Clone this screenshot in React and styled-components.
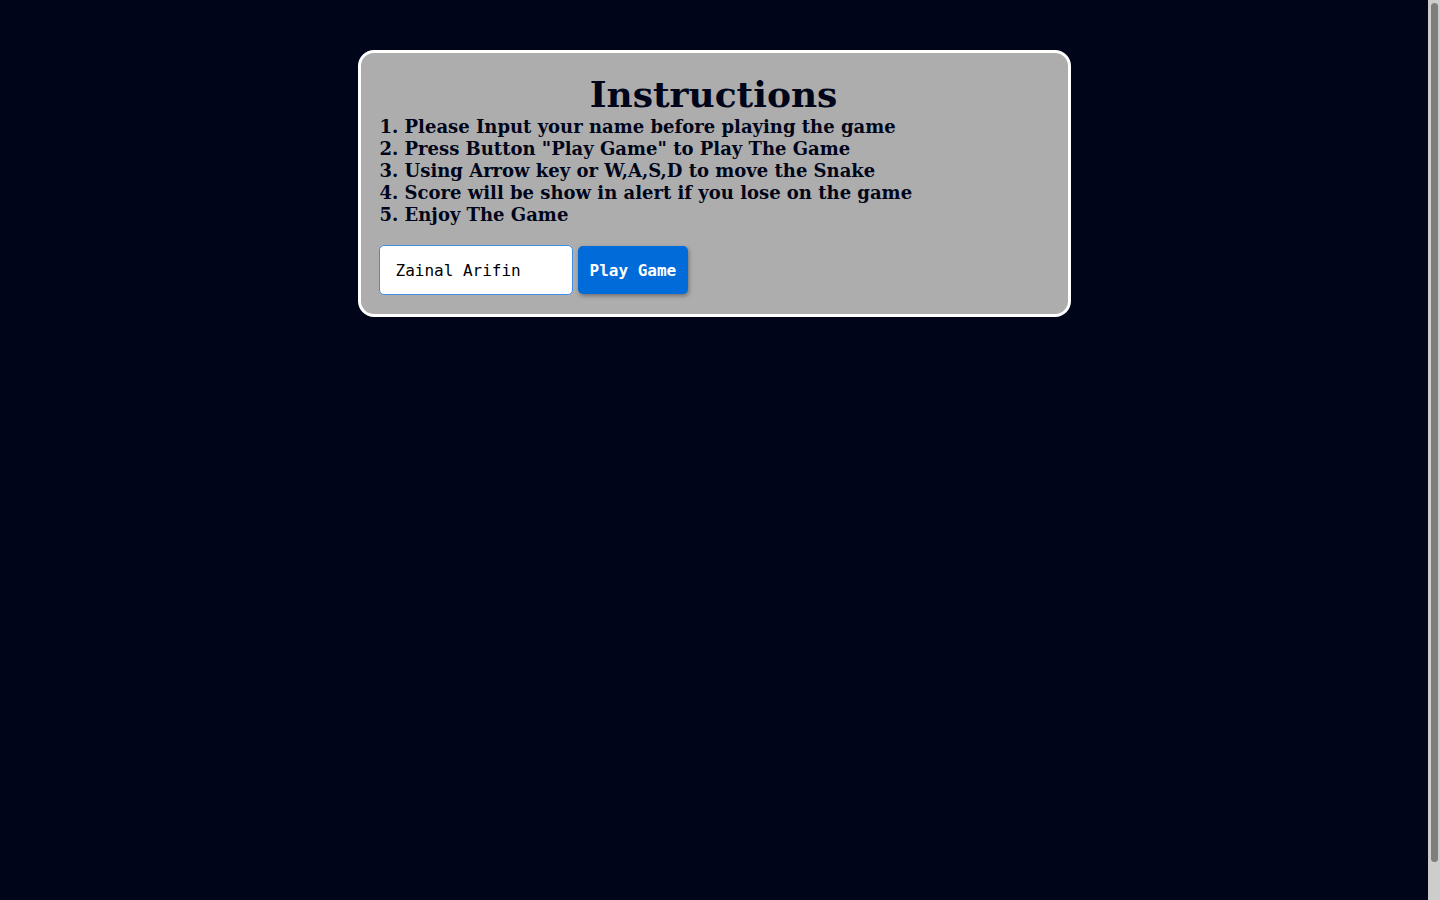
import { useState } from "react";
import styled, { createGlobalStyle } from "styled-components";

const GlobalStyle = createGlobalStyle`
  html, body {
    margin: 0;
    padding: 0;
    background: #00051a;
  }
  body {
    font-family: "DejaVu Serif", serif;
  }
`;

const Page = styled.div`
  box-sizing: border-box;
  min-height: 100vh;
  padding: 50px 12px 0 0;
  display: flex;
  justify-content: center;
  align-items: flex-start;
`;

// drawn scrollbar, the page in the picture is a bit taller than the window
const ScrollTrack = styled.div`
  position: fixed;
  top: 0;
  right: 0;
  width: 12px;
  height: 100vh;
  background: #cdcdcd;
`;

const ScrollThumb = styled.div`
  position: absolute;
  top: 3px;
  left: 3px;
  width: 7px;
  height: 859px;
  background: #7e7e7e;
  border-radius: 4px;
`;

const Card = styled.div`
  width: 668px;
  padding: 20px 20px 19px 19px;
  background: #adadad;
  border: 3px solid #ffffff;
  border-radius: 16px;
  color: #00051a;
`;

const Title = styled.h1`
  margin: 0;
  text-align: center;
  font-size: 36px;
  font-weight: bold;
  line-height: 43px;
`;

const Steps = styled.div`
  font-size: 18px;
  font-weight: bold;
  line-height: 22px;
`;

const Form = styled.div`
  display: flex;
  gap: 5px;
  margin: 19px 0 0 -1px;
  align-items: center;
`;

const NameInput = styled.input`
  box-sizing: border-box;
  width: 194px;
  height: 50px;
  padding: 0 16px;
  border: 1px solid #3f8de4;
  border-radius: 5px;
  background: #ffffff;
  font-family: "DejaVu Sans Mono", monospace;
  font-size: 16px;
  color: #000;
  outline: none;
`;

const PlayButton = styled.button`
  box-sizing: border-box;
  height: 48px;
  padding: 0 12px;
  border: none;
  border-radius: 5px;
  background: #006bd9;
  color: #ffffff;
  font-family: "DejaVu Sans Mono", monospace;
  font-size: 16px;
  font-weight: bold;
  box-shadow: 1px 2px 4px rgba(0, 0, 0, 0.35);
  cursor: pointer;
`;

const steps = [
  "1. Please Input your name before playing the game",
  '2. Press Button "Play Game" to Play The Game',
  "3. Using Arrow key or W,A,S,D to move the Snake",
  "4. Score will be show in alert if you lose on the game",
  "5. Enjoy The Game",
];

export default function App() {
  const [name, setName] = useState("Zainal Arifin");

  return (
    <>
      <GlobalStyle />
      <Page>
        <Card>
          <Title>Instructions</Title>
          <Steps>
            {steps.map((s) => (
              <div key={s}>{s}</div>
            ))}
          </Steps>
          <Form>
            <NameInput value={name} onChange={(e) => setName(e.target.value)} autoFocus />
            <PlayButton>Play Game</PlayButton>
          </Form>
        </Card>
      </Page>
      <ScrollTrack>
        <ScrollThumb />
      </ScrollTrack>
    </>
  );
}
